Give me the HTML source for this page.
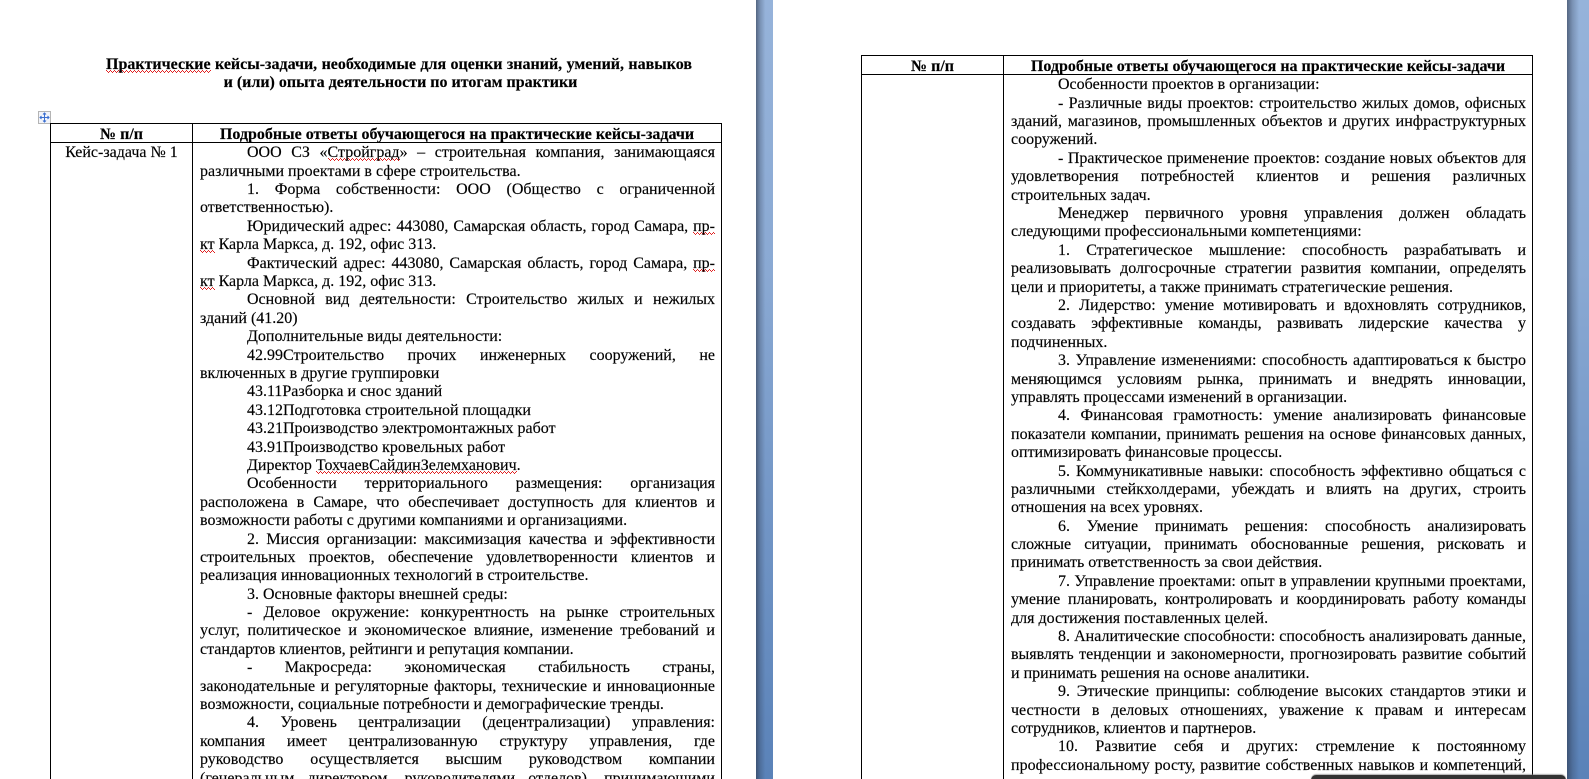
<!DOCTYPE html>
<html lang="ru"><head><meta charset="utf-8"><title>Документ</title>
<style>
html,body{margin:0;padding:0;width:1589px;height:779px;overflow:hidden;background:#fff}
body{position:relative;font-family:"Liberation Serif",serif;font-size:16px;color:#000;-webkit-text-stroke:.15px #000}
.a{position:absolute}
.v,.h{position:absolute;background:#000}
.v{width:1px}.h{height:1px}
.gut{position:absolute;top:0;height:779px;background:linear-gradient(90deg,rgba(40,50,70,.6) 0,rgba(40,50,70,.25) 25%,rgba(255,255,255,0) 55%),linear-gradient(180deg,#96b3da 0,#8aa9d3 35%,#6f93c4 70%,#5a82b8 100%)}
.col{position:absolute;line-height:18.4px}
.col div{height:18.4px;white-space:nowrap;text-align:justify;text-align-last:justify}
.col .i{text-indent:47px}
.col .l{text-align-last:left}
.col .il{text-indent:47px;text-align-last:left}
.w{background-image:repeating-linear-gradient(90deg,#e02020 0 1px,transparent 1px 4px),repeating-linear-gradient(90deg,transparent 0 1px,#e02020 1px 2px,transparent 2px 3px,#e02020 3px 4px),repeating-linear-gradient(90deg,transparent 0 2px,#e02020 2px 3px,transparent 3px 4px);background-repeat:no-repeat;background-size:100% 1px;background-position:0 calc(100% - 2px),0 calc(100% - 1px),0 100%}
.c{position:absolute;text-align:center;white-space:nowrap;line-height:18.4px}
.b{font-weight:bold}
</style></head><body>
<div class="gut" style="left:756px;width:17px"></div>
<div class="gut" style="left:1567px;width:22px"></div>

<div class="a b" style="left:106px;top:56px;width:586px;line-height:18.4px;white-space:nowrap;text-align:justify;text-align-last:justify"><span class="w">Практические</span> кейсы-задачи, необходимые для оценки знаний, умений, навыков</div>
<div class="c b" style="left:107.5px;top:74.4px;width:586px">и (или) опыта деятельности по итогам практики</div>

<div class="a" style="left:38px;top:111px;width:11px;height:11px;border:1px solid #b4b4b4;background:#f2f4fa"><svg width="11" height="11" viewBox="0 0 11 11" style="display:block"><path d="M5.5 1V10M1 5.5H10M4 2.5L5.5 1L7 2.5M4 8.5L5.5 10L7 8.5M2.5 4L1 5.5L2.5 7M8.5 4L10 5.5L8.5 7" fill="none" stroke="#3b6fd0" stroke-width="1"/></svg></div>

<!-- left table -->
<div class="h" style="left:50px;top:123px;width:672px"></div>
<div class="h" style="left:50px;top:142px;width:672px"></div>
<div class="v" style="left:50px;top:123px;height:656px"></div>
<div class="v" style="left:192px;top:123px;height:656px"></div>
<div class="v" style="left:721px;top:123px;height:656px"></div>
<div class="c b" style="left:51px;top:125.5px;width:141px">№ п/п</div>
<div class="c b" style="left:193px;top:125.5px;width:528px">Подробные ответы обучающегося на практические кейсы-задачи</div>
<div class="c" style="left:51px;top:144.3px;width:141px">Кейс-задача № 1</div>
<div class="col" style="left:200px;top:144.3px;width:515px">
<div class="i">ООО СЗ «<span class="w">Стройград</span>» – строительная компания, занимающаяся</div>
<div class="l">различными проектами в сфере строительства.</div>
<div class="i">1. Форма собственности: ООО (Общество с ограниченной</div>
<div class="l">ответственностью).</div>
<div class="i">Юридический адрес: 443080, Самарская область, город Самара, <span class="w">пр-</span></div>
<div class="l"><span class="w">кт</span> Карла Маркса, д. 192, офис 313.</div>
<div class="i">Фактический адрес: 443080, Самарская область, город Самара, <span class="w">пр-</span></div>
<div class="l"><span class="w">кт</span> Карла Маркса, д. 192, офис 313.</div>
<div class="i">Основной вид деятельности: Строительство жилых и нежилых</div>
<div class="l">зданий (41.20)</div>
<div class="il">Дополнительные виды деятельности:</div>
<div class="i">42.99Строительство прочих инженерных сооружений, не</div>
<div class="l">включенных в другие группировки</div>
<div class="il">43.11Разборка и снос зданий</div>
<div class="il">43.12Подготовка строительной площадки</div>
<div class="il">43.21Производство электромонтажных работ</div>
<div class="il">43.91Производство кровельных работ</div>
<div class="il">Директор <span class="w">ТохчаевСайдинЗелемханович</span>.</div>
<div class="i">Особенности территориального размещения: организация</div>
<div>расположена в Самаре, что обеспечивает доступность для клиентов и</div>
<div class="l">возможности работы с другими компаниями и организациями.</div>
<div class="i">2. Миссия организации: максимизация качества и эффективности</div>
<div>строительных проектов, обеспечение удовлетворенности клиентов и</div>
<div class="l">реализация инновационных технологий в строительстве.</div>
<div class="il">3. Основные факторы внешней среды:</div>
<div class="i">- Деловое окружение: конкурентность на рынке строительных</div>
<div>услуг, политическое и экономическое влияние, изменение требований и</div>
<div class="l">стандартов клиентов, рейтинги и репутация компании.</div>
<div class="i">- Макросреда: экономическая стабильность страны,</div>
<div>законодательные и регуляторные факторы, технические и инновационные</div>
<div class="l">возможности, социальные потребности и демографические тренды.</div>
<div class="i">4. Уровень централизации (децентрализации) управления:</div>
<div>компания имеет централизованную структуру управления, где</div>
<div>руководство осуществляется высшим руководством компании</div>
<div>(генеральным директором, руководителями отделов), принимающими</div>
</div>

<!-- right table -->
<div class="h" style="left:861px;top:55px;width:672px"></div>
<div class="h" style="left:861px;top:74px;width:672px"></div>
<div class="v" style="left:861px;top:55px;height:724px"></div>
<div class="v" style="left:1003px;top:55px;height:724px"></div>
<div class="v" style="left:1532px;top:55px;height:724px"></div>
<div class="c b" style="left:862px;top:57.5px;width:141px">№ п/п</div>
<div class="c b" style="left:1004px;top:57.5px;width:528px">Подробные ответы обучающегося на практические кейсы-задачи</div>
<div class="col" style="left:1011px;top:76.3px;width:515px">
<div class="il">Особенности проектов в организации:</div>
<div class="i">- Различные виды проектов: строительство жилых домов, офисных</div>
<div>зданий, магазинов, промышленных объектов и других инфраструктурных</div>
<div class="l">сооружений.</div>
<div class="i">- Практическое применение проектов: создание новых объектов для</div>
<div>удовлетворения потребностей клиентов и решения различных</div>
<div class="l">строительных задач.</div>
<div class="i">Менеджер первичного уровня управления должен обладать</div>
<div class="l">следующими профессиональными компетенциями:</div>
<div class="i">1. Стратегическое мышление: способность разрабатывать и</div>
<div>реализовывать долгосрочные стратегии развития компании, определять</div>
<div class="l">цели и приоритеты, а также принимать стратегические решения.</div>
<div class="i">2. Лидерство: умение мотивировать и вдохновлять сотрудников,</div>
<div>создавать эффективные команды, развивать лидерские качества у</div>
<div class="l">подчиненных.</div>
<div class="i">3. Управление изменениями: способность адаптироваться к быстро</div>
<div>меняющимся условиям рынка, принимать и внедрять инновации,</div>
<div class="l">управлять процессами изменений в организации.</div>
<div class="i">4. Финансовая грамотность: умение анализировать финансовые</div>
<div>показатели компании, принимать решения на основе финансовых данных,</div>
<div class="l">оптимизировать финансовые процессы.</div>
<div class="i">5. Коммуникативные навыки: способность эффективно общаться с</div>
<div>различными стейкхолдерами, убеждать и влиять на других, строить</div>
<div class="l">отношения на всех уровнях.</div>
<div class="i">6. Умение принимать решения: способность анализировать</div>
<div>сложные ситуации, принимать обоснованные решения, рисковать и</div>
<div class="l">принимать ответственность за свои действия.</div>
<div class="i">7. Управление проектами: опыт в управлении крупными проектами,</div>
<div>умение планировать, контролировать и координировать работу команды</div>
<div class="l">для достижения поставленных целей.</div>
<div class="i">8. Аналитические способности: способность анализировать данные,</div>
<div>выявлять тенденции и закономерности, прогнозировать развитие событий</div>
<div class="l">и принимать решения на основе аналитики.</div>
<div class="i">9. Этические принципы: соблюдение высоких стандартов этики и</div>
<div>честности в деловых отношениях, уважение к правам и интересам</div>
<div class="l">сотрудников, клиентов и партнеров.</div>
<div class="i">10. Развитие себя и других: стремление к постоянному</div>
<div>профессиональному росту, развитие собственных навыков и компетенций,</div>
</div>

<div class="a" style="left:1311px;top:775px;width:255px;height:12px;background:#333;border-radius:5px 5px 0 0;box-shadow:0 -1px 1px rgba(120,120,120,.6)"></div>
</body></html>
